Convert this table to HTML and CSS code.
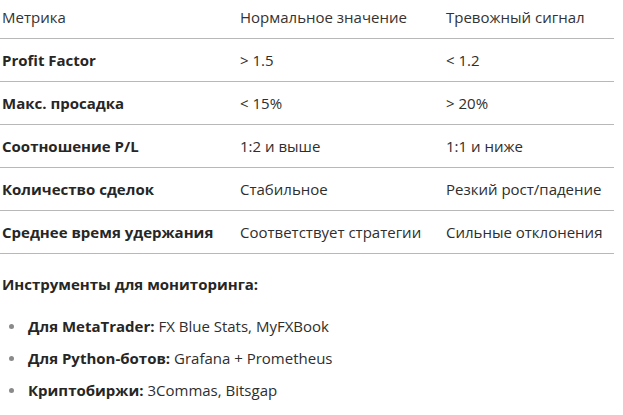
FILE: index.html
```html
<!DOCTYPE html>
<html lang="ru">
<head>
<meta charset="utf-8">
<link rel="stylesheet" href="styles.css">
</head>
<body>
<div class="page">
  <table class="metrics">
    <colgroup>
      <col class="c1"><col class="c2"><col class="c3">
    </colgroup>
    <thead>
      <tr><th>Метрика</th><th>Нормальное значение</th><th>Тревожный сигнал</th></tr>
    </thead>
    <tbody>
      <tr><td><strong>Profit Factor</strong></td><td>&gt; 1.5</td><td>&lt; 1.2</td></tr>
      <tr><td><strong>Макс. просадка</strong></td><td>&lt; 15%</td><td>&gt; 20%</td></tr>
      <tr><td><strong>Соотношение P/L</strong></td><td>1:2 и выше</td><td>1:1 и ниже</td></tr>
      <tr><td><strong>Количество сделок</strong></td><td>Стабильное</td><td>Резкий рост/падение</td></tr>
      <tr><td><strong>Среднее время удержания</strong></td><td>Соответствует стратегии</td><td>Сильные отклонения</td></tr>
    </tbody>
  </table>
  <p class="lead"><strong>Инструменты для мониторинга:</strong></p>
  <ul class="tools">
    <li><strong>Для MetaTrader:</strong> FX Blue Stats, MyFXBook</li>
    <li><strong>Для Python-ботов:</strong> Grafana + Prometheus</li>
    <li><strong>Криптобиржи:</strong> 3Commas, Bitsgap</li>
  </ul>
</div>
</body>
</html>
```

FILE: styles.css
```css
html, body {
  margin: 0;
  padding: 0;
  background: #ffffff;
}
.page {
  width: 614px;
  font-family: "Open Sans", "Noto Sans", sans-serif;
  font-size: 15px;
  line-height: 22px;
  color: #2e2e2e;
}
.metrics {
  width: 614px;
  border-collapse: collapse;
  table-layout: fixed;
}
.c1 { width: 238px; }
.c2 { width: 206px; }
.metrics th {
  font-weight: 400;
  text-align: left;
  color: #333333;
  padding: 6px 2px 10px 2px;
  border-bottom: 1px solid #b8b8b8;
  white-space: nowrap;
}
.metrics td {
  padding: 10px 2px;
  border-bottom: 1px solid #b8b8b8;
  white-space: nowrap;
}
.metrics strong { font-weight: 700; color: #262626; }
.lead {
  margin: 19px 0 0 2px;
}
.lead strong { font-weight: 700; color: #262626; }
.tools {
  margin: 20px 0 0 0;
  padding: 0 0 0 28px;
  list-style: none;
}
.tools li {
  position: relative;
  margin-bottom: 10px;
}
.tools li::before {
  content: "";
  position: absolute;
  left: -19px;
  top: 9px;
  width: 5px;
  height: 5px;
  border-radius: 50%;
  background: #8a8a8a;
}
.tools strong { font-weight: 700; color: #262626; }
```
